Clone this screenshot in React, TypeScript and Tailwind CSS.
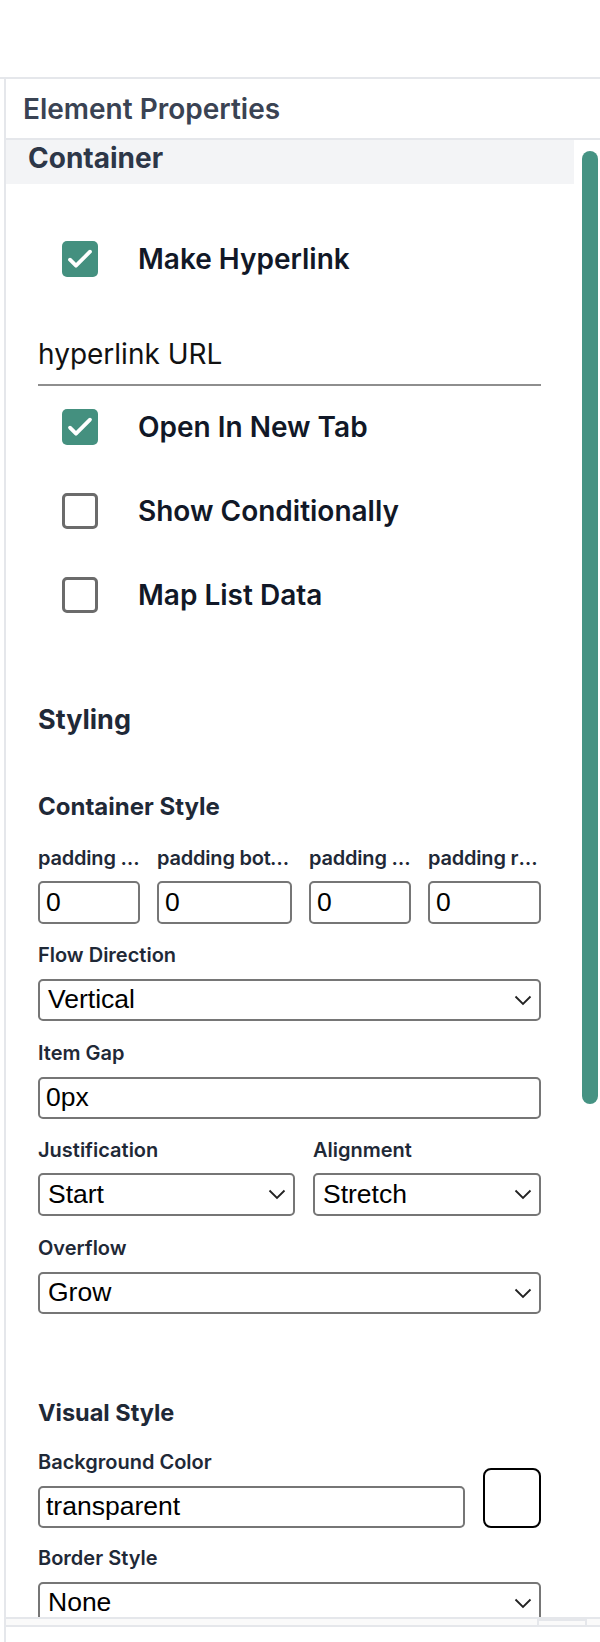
import { ReactNode } from 'react';

const inter = { fontFamily: 'Inter, "Noto Sans", sans-serif' };
const arial = { fontFamily: '"Liberation Sans", Arial, sans-serif' };

function Check({ checked, label }: { checked: boolean; label: string }) {
  return (
    <div className="flex items-center h-[36px] ml-[24px]">
      {checked ? (
        <div className="w-[36px] h-[36px] rounded-[5px] bg-[#44907f] flex items-center justify-center">
          <svg width="32" height="32" viewBox="0 0 24 24" fill="none">
            <path d="M4.5 12.5l4.5 4.5L19.5 6.5" stroke="white" strokeWidth="2.8" strokeLinecap="round" strokeLinejoin="round" />
          </svg>
        </div>
      ) : (
        <div className="w-[36px] h-[36px] rounded-[5px] border-[3px] border-[#6b6b6b] bg-white" />
      )}
      <span className="ml-[40px] text-[28px] font-semibold text-[#111827] leading-none">{label}</span>
    </div>
  );
}

function Label({ children, className = '' }: { children: ReactNode; className?: string }) {
  return (
    <div className={`h-[24px] leading-[24px] text-[20px] font-semibold text-[#1f2937] truncate ${className}`}>
      {children}
    </div>
  );
}

function Field({ value, className = '' }: { value: string; className?: string }) {
  return (
    <div
      className={`h-[42px] border-2 border-[#767676] rounded-[5px] bg-white flex items-center pl-[6px] text-[26.5px] text-black ${className}`}
      style={arial}
    >
      {value}
    </div>
  );
}

function Dropdown({ value, className = '' }: { value: string; className?: string }) {
  return (
    <div
      className={`h-[42px] border-2 border-[#767676] rounded-[5px] bg-white flex items-center justify-between pl-[8px] pr-[7px] text-[26.5px] text-black ${className}`}
      style={arial}
    >
      <span>{value}</span>
      <svg width="18" height="11" viewBox="0 0 18 11" fill="none">
        <path d="M1.5 1.5L9 9l7.5-7.5" stroke="#222" strokeWidth="1.8" />
      </svg>
    </div>
  );
}

export default function App() {
  return (
    <div className="w-[600px] h-[1642px] bg-white overflow-hidden flex flex-col" style={inter}>
      {/* top blank area */}
      <div className="h-[79px] shrink-0 border-b-2 border-[#e5e7eb]" />

      <div className="flex-1 ml-[4px] border-l-2 border-[#e5e7eb] flex flex-col">
        {/* Header */}
        <div className="h-[61px] shrink-0 border-b-2 border-[#e5e7eb] flex items-center pl-[17px]">
          <span className="text-[28px] font-semibold text-[#3a4353]">Element Properties</span>
        </div>

        {/* Scrolling body */}
        <div className="h-[1477px] shrink-0 relative overflow-hidden">
          <div className="w-[568px]">
            <div className="h-[44px] bg-[#f3f4f6] pl-[22px] pt-[3px]">
              <span className="text-[28px] font-bold text-[#2d3748] leading-[30px]">Container</span>
            </div>

            <div className="pl-[32px] w-[535px]">
              <div className="mt-[57px]">
                <Check checked label="Make Hyperlink" />
              </div>

              <div className="mt-[59px] pb-[12px] border-b-2 border-[#8e8e8e]">
                <div className="h-[36px] leading-[36px] text-[28px] text-[#111]">hyperlink URL</div>
              </div>

              <div className="mt-[23px] flex flex-col gap-[48px]">
                <Check checked label="Open In New Tab" />
                <Check checked={false} label="Show Conditionally" />
                <Check checked={false} label="Map List Data" />
              </div>

              <div className="mt-[90px] h-[34px] leading-[34px] text-[27px] font-bold text-[#1f2937]">Styling</div>

              {/* Container Style */}
              <div className="mt-[55px] h-[30px] leading-[30px] text-[24px] font-bold text-[#1f2937]">Container Style</div>

              <div className="mt-[24px] flex gap-[17px]">
                {[
                  ['padding top', 'w-[102px]'],
                  ['padding bottom', 'w-[135px]'],
                  ['padding left', 'w-[102px]'],
                  ['padding right', 'w-[113px]'],
                ].map(([name, w]) => (
                  <div key={name} className={`${w} flex flex-col`}>
                    <Label className="text-[19.5px] tracking-[-0.2px]">{name}</Label>
                    <Field value="0" className="mt-[11px] h-[43px]" />
                  </div>
                ))}
              </div>

              <Label className="mt-[19px]">Flow Direction</Label>
              <Dropdown value="Vertical" className="mt-[12px]" />

              <Label className="mt-[20px]">Item Gap</Label>
              <Field value="0px" className="mt-[12px]" />

              <div className="mt-[19px] flex gap-[18px]">
                <div className="w-[257px]">
                  <Label>Justification</Label>
                  <Dropdown value="Start" className="mt-[11px] h-[43px]" />
                </div>
                <div className="flex-1">
                  <Label>Alignment</Label>
                  <Dropdown value="Stretch" className="mt-[11px] h-[43px]" />
                </div>
              </div>

              <Label className="mt-[20px]">Overflow</Label>
              <Dropdown value="Grow" className="mt-[12px]" />

              {/* Visual Style */}
              <div className="mt-[84px] h-[30px] leading-[30px] text-[23.5px] font-bold text-[#1f2937]">Visual Style</div>

              <div className="mt-[22px] flex items-end gap-[18px]">
                <div className="flex-1">
                  <Label>Background Color</Label>
                  <Field value="transparent" className="mt-[12px]" />
                </div>
                <div className="w-[58px] h-[60px] border-2 border-black rounded-[8px] bg-white" />
              </div>

              <Label className="mt-[18px]">Border Style</Label>
              <Dropdown value="None" className="mt-[12px]" />
            </div>
          </div>

          {/* scrollbar thumb */}
          <div className="absolute right-[2px] top-[11px] w-[16px] h-[953px] rounded-full bg-[#459383]" />
        </div>

        {/* bottom bar */}
        <div className="flex-1 border-t-2 border-[#e5e7eb] flex flex-col">
          <div className="h-[8px] bg-[#fafafa] border-b-2 border-[#e5e7eb] flex justify-end pr-[13px]">
            <div className="w-[50px] h-[8px] border-2 border-b-0 border-[#e5e7eb]" />
          </div>
          <div className="flex-1 bg-white" />
        </div>
      </div>
    </div>
  );
}
